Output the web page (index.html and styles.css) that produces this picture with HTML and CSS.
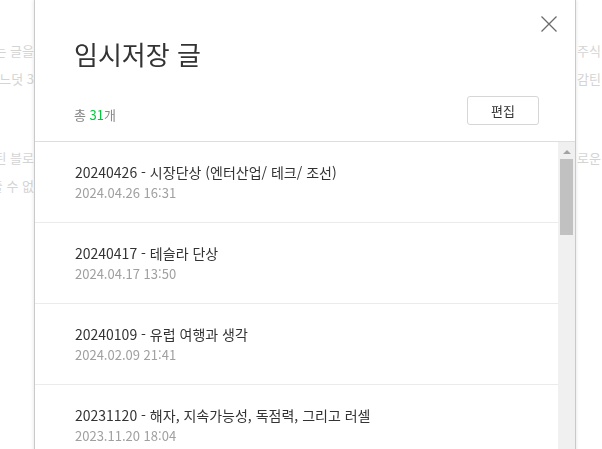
FILE: index.html
```html
<!DOCTYPE html>
<html lang="ko">
<head>
<meta charset="utf-8">
<title>임시저장 글</title>
<link rel="stylesheet" href="styles.css">
</head>
<body>
<div class="page">
  <div class="bg-para">
    <div class="bg-line"><div class="bg-l"><span>지금 쓰는 글을</span></div><div class="bg-r">주식 투자 이야기</div></div>
    <div class="bg-line"><div class="bg-l"><span>벌써 어느덧 3</span></div><div class="bg-r">감틴 기록들</div></div>
  </div>
  <div class="bg-para second">
    <div class="bg-line"><div class="bg-l"><span>새롭게 시작된 블로</span></div><div class="bg-r">로운 시작</div></div>
    <div class="bg-line"><div class="bg-l"><span>보여줄 수 없</span></div><div class="bg-r"></div></div>
  </div>
</div>

<div class="modal">
  <button class="close" aria-label="닫기">
    <svg width="16" height="16" viewBox="0 0 16 16"><path d="M0.5 0.5 L15.5 15.5 M15.5 0.5 L0.5 15.5" stroke="#6b6b6b" stroke-width="1.3" fill="none"/></svg>
  </button>
  <div class="head">
    <h1 class="title">임시저장 글</h1>
    <div class="meta">
      <span class="count">총 <em>31</em>개</span>
      <button class="edit">편집</button>
    </div>
  </div>
  <div class="list-wrap">
    <ul class="list">
      <li class="item"><p class="item-title">20240426 - 시장단상 (엔터산업/ 테크/ 조선)</p><p class="item-date">2024.04.26 16:31</p></li>
      <li class="item"><p class="item-title">20240417 - 테슬라 단상</p><p class="item-date">2024.04.17 13:50</p></li>
      <li class="item"><p class="item-title">20240109 - 유럽 여행과 생각</p><p class="item-date">2024.02.09 21:41</p></li>
      <li class="item"><p class="item-title">20231120 - 해자, 지속가능성, 독점력, 그리고 러셀</p><p class="item-date">2023.11.20 18:04</p></li>
      <li class="item"><p class="item-title">20231015 - 투자 메모</p><p class="item-date">2023.10.15 10:12</p></li>
    </ul>
    <div class="scrollbar">
      <div class="arrow"></div>
      <div class="thumb"></div>
    </div>
  </div>
</div>
</body>
</html>
```

FILE: styles.css
```css
* { box-sizing: border-box; }

html, body {
  margin: 0;
  padding: 0;
  background: #fff;
  overflow: hidden;
  font-family: "Noto Sans CJK KR", "Noto Sans", sans-serif;
}

.page {
  width: 602px;
  height: 449px;
  padding-top: 37px;
}

.bg-para {
  display: flex;
  flex-direction: column;
}

.bg-para.second {
  margin-top: 51px;
}

.bg-line {
  display: grid;
  grid-template-columns: 34px 542px 1fr;
  height: 28px;
  line-height: 28px;
  font-size: 13px;
  color: #d4d4d4;
  white-space: nowrap;
}

.bg-l {
  display: flex;
  justify-content: flex-end;
  overflow: hidden;
}

.bg-r {
  grid-column: 3;
  overflow: hidden;
  padding-left: 1px;
}

.modal {
  position: fixed;
  left: 34px;
  top: 0;
  width: 542px;
  height: 520px;
  background: #fff;
  border: 1px solid #c9c9c9;
  border-top: none;
  box-shadow: 0 0 4px rgba(0, 0, 0, 0.12);
  display: flex;
  flex-direction: column;
}

.close {
  position: absolute;
  top: 16px;
  right: 18px;
  width: 16px;
  height: 16px;
  padding: 0;
  border: none;
  background: none;
  display: block;
}

.close svg { display: block; }

.head {
  padding: 36px 36px 16px 39px;
  border-bottom: 1px solid #dedede;
}

.title {
  margin: 0;
  font-size: 26px;
  line-height: 36px;
  font-weight: 400;
  color: #333;
}

.meta {
  margin-top: 24px;
  display: flex;
  justify-content: space-between;
  align-items: flex-end;
}

.count {
  font-size: 13px;
  line-height: 20px;
  color: #888;
}

.count em {
  font-style: normal;
  color: #00c73c;
}

.edit {
  width: 72px;
  height: 29px;
  padding: 0;
  border: 1px solid #d6d6d6;
  border-radius: 3px;
  background: #fff;
  font-family: inherit;
  font-size: 13px;
  color: #333;
}

.list-wrap {
  flex: 1;
  display: flex;
  min-height: 0;
}

.list {
  flex: 1;
  margin: 0;
  padding: 0;
  list-style: none;
  overflow: hidden;
}

.item {
  padding: 20px 40px 20px 40px;
  border-bottom: 1px solid #ebebeb;
}

.item-title {
  margin: 0;
  font-size: 14px;
  line-height: 20px;
  color: #333;
  white-space: nowrap;
}

.item-date {
  margin: 2px 0 0;
  font-size: 13px;
  line-height: 18px;
  color: #a0a0a0;
}

.scrollbar {
  width: 17px;
  background: #f0f0f0;
  display: flex;
  flex-direction: column;
  align-items: center;
}

.arrow {
  margin-top: 8px;
  width: 0;
  height: 0;
  border-left: 4px solid transparent;
  border-right: 4px solid transparent;
  border-bottom: 4px solid #a3a3a3;
}

.thumb {
  margin-top: 5px;
  width: 13px;
  height: 76px;
  background: #c1c1c1;
}
```
